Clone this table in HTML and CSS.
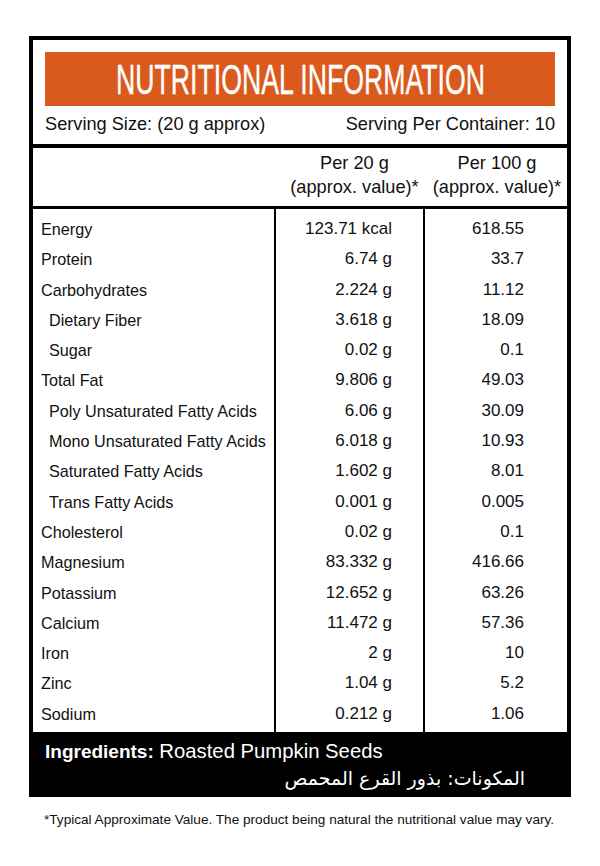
FILE: index.html
```html
<!DOCTYPE html>
<html>
<head>
<meta charset="utf-8">
<link rel="stylesheet" href="styles.css">
</head>
<body>
<div class="label">
  <div class="top">
    <div class="title"><span class="title-text">NUTRITIONAL INFORMATION</span></div>
    <div class="serving">
      <span>Serving Size: (20 g approx)</span>
      <span>Serving Per Container: 10</span>
    </div>
  </div>
  <div class="head">
    <div class="hcell"></div>
    <div class="hcell c2">Per 20 g<br>(approx. value)*</div>
    <div class="hcell c3">Per 100 g<br>(approx. value)*</div>
  </div>
  <div class="body">
    <div class="col names">
      <div class="r">Energy</div>
      <div class="r">Protein</div>
      <div class="r">Carbohydrates</div>
      <div class="r sub">Dietary Fiber</div>
      <div class="r sub">Sugar</div>
      <div class="r">Total Fat</div>
      <div class="r sub">Poly Unsaturated Fatty Acids</div>
      <div class="r sub">Mono Unsaturated Fatty Acids</div>
      <div class="r sub">Saturated Fatty Acids</div>
      <div class="r sub">Trans Fatty Acids</div>
      <div class="r">Cholesterol</div>
      <div class="r">Magnesium</div>
      <div class="r">Potassium</div>
      <div class="r">Calcium</div>
      <div class="r">Iron</div>
      <div class="r">Zinc</div>
      <div class="r">Sodium</div>
    </div>
    <div class="col v20">
      <div class="r">123.71 kcal</div>
      <div class="r">6.74 g</div>
      <div class="r">2.224 g</div>
      <div class="r">3.618 g</div>
      <div class="r">0.02 g</div>
      <div class="r">9.806 g</div>
      <div class="r">6.06 g</div>
      <div class="r">6.018 g</div>
      <div class="r">1.602 g</div>
      <div class="r">0.001 g</div>
      <div class="r">0.02 g</div>
      <div class="r">83.332 g</div>
      <div class="r">12.652 g</div>
      <div class="r">11.472 g</div>
      <div class="r">2 g</div>
      <div class="r">1.04 g</div>
      <div class="r">0.212 g</div>
    </div>
    <div class="col v100">
      <div class="r">618.55</div>
      <div class="r">33.7</div>
      <div class="r">11.12</div>
      <div class="r">18.09</div>
      <div class="r">0.1</div>
      <div class="r">49.03</div>
      <div class="r">30.09</div>
      <div class="r">10.93</div>
      <div class="r">8.01</div>
      <div class="r">0.005</div>
      <div class="r">0.1</div>
      <div class="r">416.66</div>
      <div class="r">63.26</div>
      <div class="r">57.36</div>
      <div class="r">10</div>
      <div class="r">5.2</div>
      <div class="r">1.06</div>
    </div>
  </div>
  <div class="ingredients">
    <div class="en"><b>Ingredients:</b> Roasted Pumpkin Seeds</div>
    <div class="ar" dir="rtl">المكونات: بذور القرع المحمص</div>
  </div>
</div>
<p class="note">*Typical Approximate Value. The product being natural the nutritional value may vary.</p>
</body>
</html>
```
FILE: styles.css
```css
* { box-sizing: border-box; }
html, body { margin: 0; padding: 0; background: #fff; }
body {
  font-family: "Liberation Sans", Arial, sans-serif;
  color: #111;
  width: 600px;
}
.label {
  margin: 36px 0 0 29px;
  width: 542px;
  border: 4px solid #000;
}
.top { padding: 12px 12px 0; }
.title {
  background: #da5a1e;
  color: #fff;
  height: 54px;
  display: flex;
  align-items: center;
  justify-content: center;
  overflow: hidden;
}
.title-text {
  display: inline-block;
  font-size: 42px;
  line-height: 54px;
  white-space: nowrap;
  transform: scaleX(0.635);
  transform-origin: center;
  padding-top: 1px;
  -webkit-text-stroke: 0.4px #fff;
}
.serving {
  display: flex;
  justify-content: space-between;
  height: 38px;
  align-items: center;
  font-size: 18.2px;
  padding: 0 0 2px;
}
.head {
  border-top: 4px solid #000;
  border-bottom: 3px solid #000;
  display: grid;
  grid-template-columns: 241px 149px 1fr;
  height: 65px;
}
.hcell {
  font-size: 18.2px;
  text-align: center;
  line-height: 24px;
  padding-top: 3px;
  white-space: nowrap;
}
.hcell.c2 { padding-left: 12px; }
.hcell.c3 { padding-left: 4px; }
.body {
  display: grid;
  grid-template-columns: 241px 149px 1fr;
}
.col { padding: 5px 0 3px; }
.col + .col { border-left: 2px solid #000; }
.r {
  height: 30.3px;
  line-height: 30.3px;
  font-size: 17px;
  white-space: nowrap;
}
.names .r { padding-left: 8px; font-size: 16.2px; }
.names .r.sub { padding-left: 16px; }
.v20 .r { text-align: right; padding-right: 31px; }
.v100 .r { text-align: right; padding-right: 43px; }
.ingredients {
  background: #000;
  color: #fff;
  padding: 6px 12px 2px;
  height: 61px;
}
.ingredients .en { font-size: 20.3px; line-height: 26px; }
.ingredients .en b { font-size: 19px; }
.ingredients .ar {
  font-family: "DejaVu Sans", "Noto Sans", sans-serif;
  font-size: 19px;
  line-height: 26px;
  padding-right: 30px;
  text-align: right;
}
.note {
  margin: 15px 0 0 44px;
  font-size: 13.6px;
  white-space: nowrap;
}
```
